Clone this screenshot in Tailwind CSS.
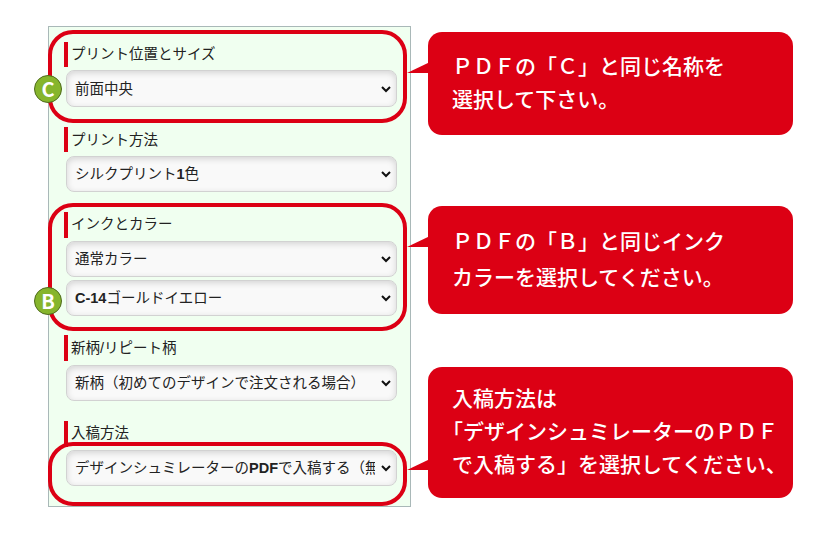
<!DOCTYPE html>
<html lang="ja">
<head>
    <meta charset="UTF-8">
    <title>プリント指定</title>
    <script src="https://cdn.jsdelivr.net/npm/@tailwindcss/browser@4"></script>
</head>
<body class="relative w-[830px] h-[533px] overflow-hidden bg-white font-['Liberation_Sans','Noto_Sans_CJK_JP',sans-serif]">
    <div class="flex items-start pl-[48px] pt-[26px]">
        <!-- form panel -->
        <div class="w-[363px] h-[481px] border border-[#a9b8b8] bg-[#f0fff0] pl-[15px] pr-[13px] pt-[15px] flex flex-col text-[14.5px] text-[#222]">
            <div class="h-[25px] border-l-4 border-[#dc0014] pl-[3px] leading-[24px]">プリント位置とサイズ</div>
            <div class="relative mt-[3px] h-[37px] ml-[2px] flex items-center rounded-lg border border-[#d2d2d2] bg-[#f9f9f9] shadow-[inset_0_2px_6px_rgba(0,0,0,0.15)] pl-[8px] pr-[21px] pt-[2px] overflow-hidden whitespace-nowrap">
                <span class="overflow-hidden">前面中央</span>
                <svg class="absolute right-[5px] top-[15px] w-[10px] h-[7px]" viewBox="0 0 10 7" fill="none" stroke="#111" stroke-width="2"><path d="M1 1l4 4 4-4"/></svg>
            </div>

            <div class="h-[25px] mt-[20px] border-l-4 border-[#dc0014] pl-[3px] leading-[26px]">プリント方法</div>
            <div class="relative mt-[4px] h-[36px] ml-[2px] flex items-center rounded-lg border border-[#d2d2d2] bg-[#f9f9f9] shadow-[inset_0_2px_6px_rgba(0,0,0,0.15)] pl-[8px] pr-[21px] pt-[2px] overflow-hidden whitespace-nowrap">
                <span class="overflow-hidden">シルクプリント<b>1</b>色</span>
                <svg class="absolute right-[5px] top-[14px] w-[10px] h-[7px]" viewBox="0 0 10 7" fill="none" stroke="#111" stroke-width="2"><path d="M1 1l4 4 4-4"/></svg>
            </div>

            <div class="h-[26px] mt-[20px] border-l-4 border-[#dc0014] pl-[3px] leading-[25px]">インクとカラー</div>
            <div class="relative mt-[3px] h-[36px] ml-[2px] flex items-center rounded-lg border border-[#d2d2d2] bg-[#f9f9f9] shadow-[inset_0_2px_6px_rgba(0,0,0,0.15)] pl-[8px] pr-[21px] pt-[2px] overflow-hidden whitespace-nowrap">
                <span class="overflow-hidden">通常カラー</span>
                <svg class="absolute right-[5px] top-[14px] w-[10px] h-[7px]" viewBox="0 0 10 7" fill="none" stroke="#111" stroke-width="2"><path d="M1 1l4 4 4-4"/></svg>
            </div>
            <div class="relative mt-[3px] h-[36px] ml-[2px] flex items-center rounded-lg border border-[#d2d2d2] bg-[#f9f9f9] shadow-[inset_0_2px_6px_rgba(0,0,0,0.15)] pl-[8px] pr-[21px] pt-[2px] overflow-hidden whitespace-nowrap">
                <span class="overflow-hidden"><b>C-14</b>ゴールドイエロー</span>
                <svg class="absolute right-[5px] top-[14px] w-[10px] h-[7px]" viewBox="0 0 10 7" fill="none" stroke="#111" stroke-width="2"><path d="M1 1l4 4 4-4"/></svg>
            </div>

            <div class="h-[26px] mt-[19px] border-l-4 border-[#dc0014] pl-[3px] leading-[26px]">新柄/リピート柄</div>
            <div class="relative mt-[4px] h-[36px] ml-[2px] flex items-center rounded-lg border border-[#d2d2d2] bg-[#f9f9f9] shadow-[inset_0_2px_6px_rgba(0,0,0,0.15)] pl-[8px] pr-[21px] pt-[2px] overflow-hidden whitespace-nowrap">
                <span class="overflow-hidden">新柄（初めてのデザインで注文される場合）</span>
                <svg class="absolute right-[5px] top-[14px] w-[10px] h-[7px]" viewBox="0 0 10 7" fill="none" stroke="#111" stroke-width="2"><path d="M1 1l4 4 4-4"/></svg>
            </div>

            <div class="h-[26px] mt-[20px] border-l-4 border-[#dc0014] pl-[3px] leading-[22px] pt-[1px]">入稿方法</div>
            <div class="relative mt-[3px] h-[36px] ml-[2px] flex items-center rounded-lg border border-[#d2d2d2] bg-[#f9f9f9] shadow-[inset_0_2px_6px_rgba(0,0,0,0.15)] pl-[8px] pr-[21px] pt-[2px] overflow-hidden whitespace-nowrap">
                <span class="overflow-hidden">デザインシュミレーターの<b>PDF</b>で入稿する（無料）</span>
                <svg class="absolute right-[5px] top-[14px] w-[10px] h-[7px]" viewBox="0 0 10 7" fill="none" stroke="#111" stroke-width="2"><path d="M1 1l4 4 4-4"/></svg>
            </div>
        </div>

        <!-- callouts -->
        <div class="ml-[17px] mt-[6px] w-[365px] flex flex-col font-medium text-white font-['Noto_Sans_CJK_JP',sans-serif]">
            <div class="h-[103px] rounded-[14px] bg-[#dc0014] pl-[24px] pt-[17px] text-[21px] leading-[33px]">
                <p>ＰＤＦの「Ｃ」と同じ名称を</p>
                <p>選択して下さい。</p>
            </div>
            <div class="h-[108px] mt-[71px] rounded-[14px] bg-[#dc0014] pl-[24px] pt-[16px] text-[21px] leading-[36px]">
                <p>ＰＤＦの「Ｂ」と同じインク</p>
                <p>カラーを選択してください。</p>
            </div>
            <div class="h-[131px] mt-[53px] rounded-[14px] bg-[#dc0014] pl-[24px] pt-[14px] text-[21px] leading-[33px] whitespace-nowrap">
                <p>入稿方法は</p>
                <p class="-ml-[10px]">「デザインシュミレーターのＰＤＦ</p>
                <p>で入稿する」を選択してください、</p>
            </div>
        </div>
    </div>

    <!-- red rings over the form -->
    <div class="absolute left-[48px] top-[30px] w-[359px] h-[93px] rounded-[25px] border-4 border-[#dc0014]"></div>
    <div class="absolute left-[48px] top-[203px] w-[359px] h-[128px] rounded-[25px] border-4 border-[#dc0014]"></div>
    <div class="absolute left-[48px] top-[442px] w-[359px] h-[64px] rounded-[25px] border-4 border-[#dc0014]"></div>

    <!-- pointers -->
    <svg class="absolute left-[407px] top-[62px] w-[23px] h-[12px]" viewBox="0 0 23 12" fill="#dc0014"><path d="M0 11L23 0V11z"/></svg>
    <svg class="absolute left-[407px] top-[236px] w-[23px] h-[12px]" viewBox="0 0 23 12" fill="#dc0014"><path d="M0 11L23 0V11z"/></svg>
    <svg class="absolute left-[407px] top-[459px] w-[23px] h-[12px]" viewBox="0 0 23 12" fill="#dc0014"><path d="M0 11L23 0V11z"/></svg>

    <!-- badges -->
    <div class="absolute left-[34px] top-[75px] w-[28px] h-[28px] rounded-full border border-[#4f6b1c] bg-[#86b52c] flex items-center justify-center text-white font-bold text-[20px] font-['Noto_Sans_CJK_JP',sans-serif]">C</div>
    <div class="absolute left-[34px] top-[287px] w-[28px] h-[28px] rounded-full border border-[#4f6b1c] bg-[#86b52c] flex items-center justify-center text-white font-bold text-[20px] font-['Noto_Sans_CJK_JP',sans-serif]">B</div>
</body>
</html>
